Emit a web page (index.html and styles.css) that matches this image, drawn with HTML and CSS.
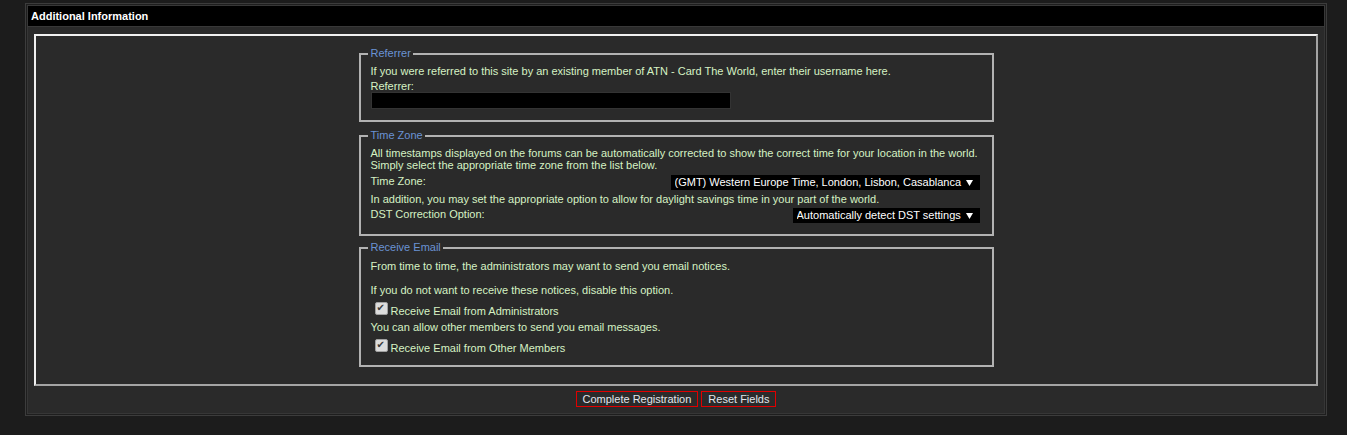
FILE: index.html
```html
<!DOCTYPE html>
<html lang="en">
<head>
<meta charset="utf-8">
<title>Additional Information</title>
<link rel="stylesheet" href="styles.css">
</head>
<body>
<div class="page">
  <div class="tborder">
    <div class="tcat">Additional Information</div>
    <div class="panelsurround">
      <div class="panel">
        <fieldset class="fs fs-ref">
          <legend>Referrer</legend>
          <div class="line">If you were referred to this site by an existing member of ATN - Card The World, enter their username here.</div>
          <div class="line gap3">Referrer:</div>
          <input class="bginput" type="text" aria-label="Referrer">
        </fieldset>

        <fieldset class="fs fs-tz">
          <legend>Time Zone</legend>
          <div class="line">All timestamps displayed on the forums can be automatically corrected to show the correct time for your location in the world.<br>Simply select the appropriate time zone from the list below.</div>
          <div class="row row-tz">
            <span class="line">Time Zone:</span>
            <span class="selectwrap">
              <select class="sel" aria-label="Time Zone">
                <option>(GMT) Western Europe Time, London, Lisbon, Casablanca</option>
              </select>
              <svg class="arrow" width="7" height="6" viewBox="0 0 7 6"><path d="M0 0H7L3.5 6Z" fill="#fff"/></svg>
            </span>
          </div>
          <div class="line gap3">In addition, you may set the appropriate option to allow for daylight savings time in your part of the world.</div>
          <div class="row row-dst">
            <span class="line">DST Correction Option:</span>
            <span class="selectwrap">
              <select class="sel" aria-label="DST Correction Option">
                <option>Automatically detect DST settings</option>
              </select>
              <svg class="arrow" width="7" height="6" viewBox="0 0 7 6"><path d="M0 0H7L3.5 6Z" fill="#fff"/></svg>
            </span>
          </div>
        </fieldset>

        <fieldset class="fs fs-mail">
          <legend>Receive Email</legend>
          <div class="line">From time to time, the administrators may want to send you email notices.</div>
          <div class="line gap12">If you do not want to receive these notices, disable this option.</div>
          <label class="cbrow"><input class="cb" type="checkbox" checked><span class="cbtext">Receive Email from Administrators</span></label>
          <div class="line gap4">You can allow other members to send you email messages.</div>
          <label class="cbrow"><input class="cb" type="checkbox" checked><span class="cbtext">Receive Email from Other Members</span></label>
        </fieldset>
      </div>
      <div class="buttons">
        <button class="button" type="button">Complete Registration</button>
        <button class="button" type="button">Reset Fields</button>
      </div>
    </div>
  </div>
</div>
</body>
</html>
```

FILE: styles.css
```css
html, body {
  margin: 0;
  padding: 0;
  background: #1c1c1c;
}

body {
  font-family: "Liberation Sans", Arial, sans-serif;
  font-size: 11px;
  color: #d6f2c4;
}

.page {
  padding: 3px 0 0 25px;
}

.tborder {
  width: 1298px;
  border: 1px solid #3c3c3c;
  padding: 1px;
  background: #1e1e1e;
}

.tcat {
  height: 20px;
  line-height: 20px;
  background: #000;
  border: 1px solid #383838;
  color: #fff;
  font-weight: bold;
  font-size: 11px;
  padding-left: 3px;
}

.panelsurround {
  background: #2a2a2a;
  border: 1px solid #363636;
  border-top: 0;
  padding: 7px 6px 6px 6px;
}

.panel {
  border-style: solid;
  border-width: 2px;
  border-color: #f0f0f0 #a4a4a4 #a4a4a4 #f0f0f0;
  padding: 11px 0 17px 0;
  display: flex;
  flex-direction: column;
  align-items: center;
}

.fs {
  width: 635px;
  box-sizing: border-box;
  margin: 0;
  border: 2px solid #b2b2b2;
  padding: 5px 12px 11px 10px;
  min-width: 0;
}

.fs-tz {
  margin-top: 7px;
}

.fs-mail {
  margin-top: 5px;
  padding-top: 6px;
}

.fs legend {
  line-height: 13px;
  font-size: 11px;
  color: #6a93d4;
  padding: 0 2px 0 3px;
  margin-left: -3px;
}

.line {
  line-height: 12px;
}

.gap3 { margin-top: 3px; }
.gap4 { margin-top: 4px; }
.gap12 { margin-top: 12px; }

.bginput {
  display: block;
  box-sizing: border-box;
  width: 360px;
  height: 17px;
  margin: 0;
  padding: 0 3px;
  background: #000;
  border: 1px solid #333;
  color: #fff;
  font: 11px "Liberation Sans", Arial, sans-serif;
}

.row {
  display: flex;
  justify-content: space-between;
  align-items: flex-start;
}

.row-tz { margin-top: 4px; }
.row-dst { margin-top: 3px; }

.selectwrap {
  display: inline-flex;
  align-items: center;
  height: 15px;
  background: #000;
  padding: 0 7px 0 0;
}

.sel {
  appearance: none;
  -webkit-appearance: none;
  background: transparent;
  border: 0;
  outline: 0;
  color: #fff;
  font: 11px "Liberation Sans", Arial, sans-serif;
  height: 15px;
  line-height: 15px;
  padding: 0 4px 0 4px;
  margin: 0;
}

.arrow {
  display: block;
}

.cbrow {
  display: flex;
  align-items: flex-start;
  margin-top: 4px;
  height: 17px;
}

.cb {
  appearance: none;
  -webkit-appearance: none;
  position: relative;
  box-sizing: border-box;
  width: 13px;
  height: 13px;
  margin: 2px 3px 0 4px;
  background: #dcdcdc;
  border: 1px solid #a0a0a0;
  border-radius: 2px;
}

.cb:checked::after {
  content: "\2714";
  position: absolute;
  left: 1px;
  top: -1px;
  font: 10px "DejaVu Sans", sans-serif;
  color: #3a3a3a;
}

.cbtext {
  padding-top: 5px;
  line-height: 12px;
}

.buttons {
  display: flex;
  justify-content: center;
  gap: 3px;
  margin-top: 5px;
}

.button {
  height: 16px;
  margin: 0;
  padding: 0 6px;
  background: #2a2a2a;
  border: 1px solid #e00000;
  color: #e2e6ec;
  font: 11px "Liberation Sans", Arial, sans-serif;
  line-height: 14px;
}
```
